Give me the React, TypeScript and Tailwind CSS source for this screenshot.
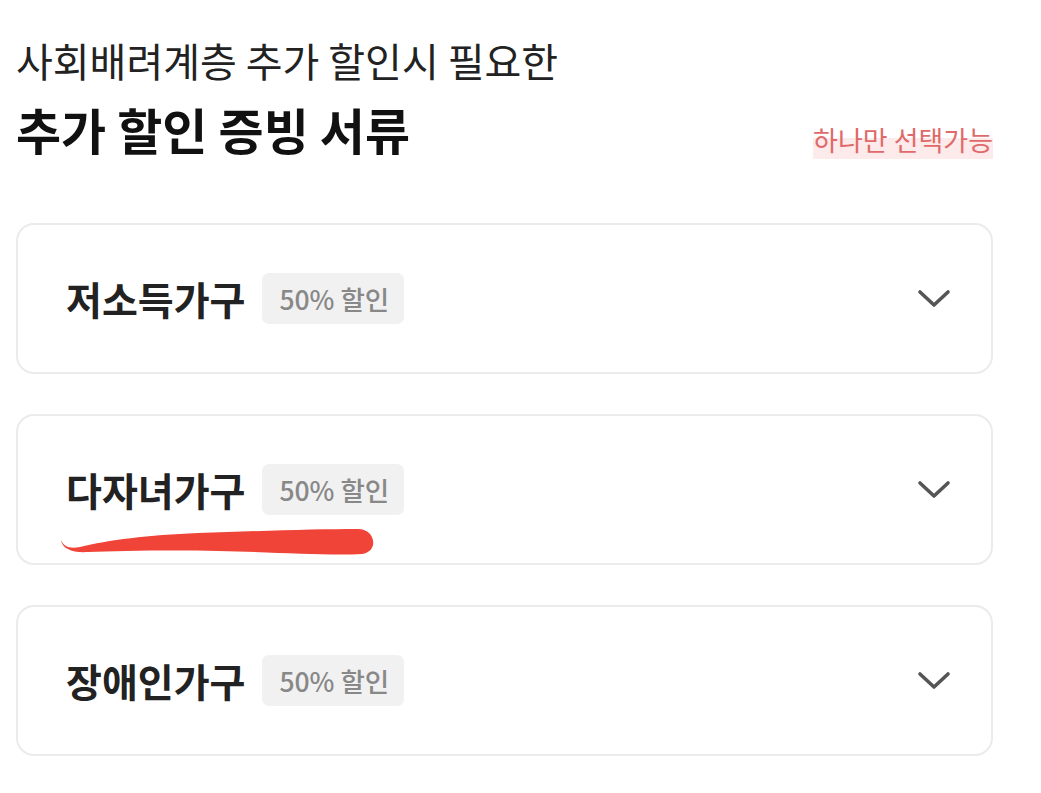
const ITEMS = [
  { name: "저소득가구", discount: "50% 할인" },
  { name: "다자녀가구", discount: "50% 할인", marked: true },
  { name: "장애인가구", discount: "50% 할인" },
];

function Chevron() {
  return (
    <svg width="34" height="20" viewBox="0 0 34 20" className="text-[#555]">
      <polyline
        points="3,3 17,16 31,3"
        fill="none"
        stroke="currentColor"
        strokeWidth="3.6"
        strokeLinecap="round"
        strokeLinejoin="round"
      />
    </svg>
  );
}

// hand-drawn red underline over the second card
function Scribble() {
  return (
    <svg
      className="pointer-events-none absolute left-[40px] top-[110px]"
      width="330"
      height="34"
      viewBox="0 0 330 34"
    >
      <path
        d="M3 14 C 6 21, 12 23, 22 21 C 50 14, 90 9, 140 7 C 200 5, 260 3, 300 3 C 318 3, 321 26, 304 28 C 270 30, 220 26, 160 25 C 110 24, 60 25, 30 26 C 15 27, 4 23, 3 14 Z"
        fill="#f04438"
      />
    </svg>
  );
}

function DocCard({ name, discount, marked }: { name: string; discount: string; marked?: boolean }) {
  return (
    <div className="relative flex h-[151px] items-center rounded-[18px] border-2 border-[#ebebeb] bg-white pl-[48px] pr-[40px]">
      <span className="text-[39px] font-semibold text-[#222]">{name}</span>
      <span className="ml-[17px] flex h-[51px] items-center rounded-[7px] bg-[#f1f1f1] pl-[17px] pr-[15px] text-[26.5px] font-medium text-[#888]">
        {discount}
      </span>
      <div className="flex-1" />
      <Chevron />
      {marked && <Scribble />}
    </div>
  );
}

export default function App() {
  return (
    <div
      className="min-h-screen bg-white pl-4 pr-[48px] pt-[32px]"
      style={{ fontFamily: '"Noto Sans CJK KR", "Noto Sans", sans-serif' }}
    >
      <p className="text-[40px] leading-[56px] text-[#222]">사회배려계층 추가 할인시 필요한</p>
      <div className="mt-[11px] flex items-end justify-between">
        <h1 className="text-[49px] font-bold leading-[60px] text-[#111]">추가 할인 증빙 서류</h1>
        <span className="bg-[linear-gradient(transparent_45%,#fdeaea_45%)] text-[27px] leading-[38px] text-[#e06a6a]">
          하나만 선택가능
        </span>
      </div>
      <div className="mt-[64px] flex flex-col gap-[40px]">
        {ITEMS.map((item) => (
          <DocCard key={item.name} {...item} />
        ))}
      </div>
    </div>
  );
}
